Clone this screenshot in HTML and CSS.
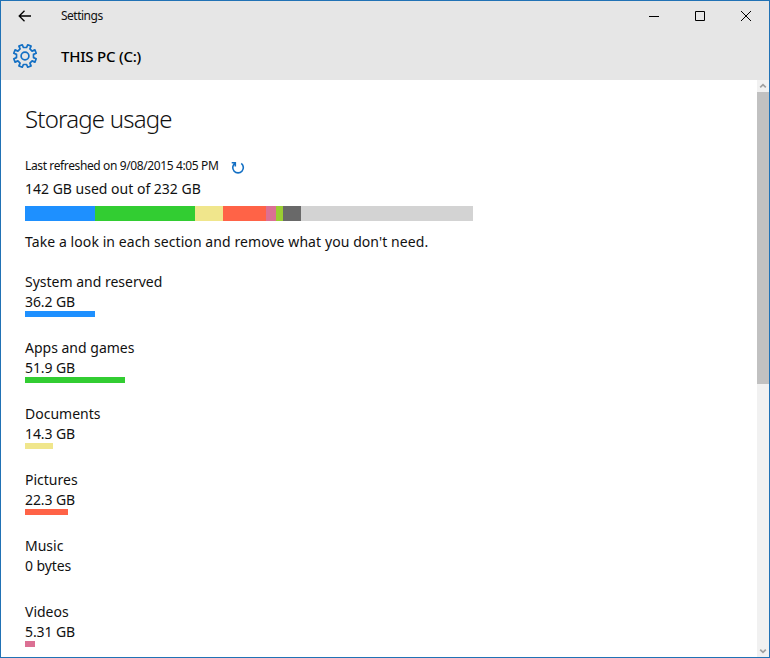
FILE: index.html
```html
<!DOCTYPE html>
<html lang="en">
<head>
<meta charset="utf-8">
<title>Settings</title>
<link rel="stylesheet" href="styles.css">
</head>
<body>
<div class="window">
  <header class="header">
    <div class="titlebar">
      <svg class="back" width="14" height="12" viewBox="0 0 14 12"><path d="M13 6H1.2M6.5 .8L1.2 6l5.3 5.2"/></svg>
      <span class="app-name">Settings</span>
      <svg class="control" width="46" height="30" viewBox="0 0 46 30"><path d="M18 15.5h10"/></svg>
      <svg class="control" width="46" height="30" viewBox="0 0 46 30"><path d="M18.5 10.5h9v9h-9z"/></svg>
      <svg class="control" width="46" height="30" viewBox="0 0 46 30"><path d="M18 10l10 10M28 10L18 20"/></svg>
    </div>
    <div class="heading">
      <svg class="gear" width="26" height="26" viewBox="-13 -13 26 26"><path d="M8.5 1.6L11.2 2.7 9.9 6.1 7.1 4.9 4.9 7.1 6.1 9.9 2.7 11.2 1.6 8.5H-1.6L-2.7 11.2-6.1 9.9-4.9 7.1-7.1 4.9-9.9 6.1-11.2 2.7-8.5 1.6V-1.6L-11.2-2.7-9.9-6.1-7.1-4.9-4.9-7.1-6.1-9.9-2.7-11.2-1.6-8.5H1.6L2.7-11.2 6.1-9.9 4.9-7.1 7.1-4.9 9.9-6.1 11.2-2.7 8.5-1.6z"/><circle r="3.9"/></svg>
      <h1 class="drive">THIS PC (C:)</h1>
    </div>
  </header>
  <div class="body">
    <main class="content">
      <h2 class="title">Storage usage</h2>
      <div class="refreshed"><span class="stamp">Last refreshed on 9/08/2015 4:05 PM</span><svg class="refresh" width="14" height="14" viewBox="0 0 14 14"><path d="M3.8 2.4A5.3 5.3 0 1 0 10.3 2.4M.7 1.7h3.6v3.8"/></svg></div>
      <p class="total">142 GB used out of 232 GB</p>
      <div class="usage">
        <i class="system" style="width:70px"></i><i class="apps" style="width:100px"></i><i class="documents" style="width:28px"></i><i class="pictures" style="width:43px"></i><i class="videos" style="width:10px"></i><i class="mail" style="width:7px"></i><i class="other" style="width:18px"></i>
      </div>
      <p class="hint">Take a look in each section and remove what you don't need.</p>
      <section class="item"><h3>System and reserved</h3><p>36.2 GB</p><i class="system" style="width:70px"></i></section>
      <section class="item"><h3>Apps and games</h3><p>51.9 GB</p><i class="apps" style="width:100px"></i></section>
      <section class="item"><h3>Documents</h3><p>14.3 GB</p><i class="documents" style="width:28px"></i></section>
      <section class="item"><h3>Pictures</h3><p>22.3 GB</p><i class="pictures" style="width:43px"></i></section>
      <section class="item"><h3>Music</h3><p>0 bytes</p></section>
      <section class="item"><h3>Videos</h3><p>5.31 GB</p><i class="videos" style="width:10px"></i></section>
    </main>
    <div class="scrollbar">
      <svg width="12" height="12" viewBox="0 0 12 12"><path d="M3.2 7.3L6 4.6l2.8 2.7"/></svg>
      <div class="thumb"></div>
      <svg class="down" width="12" height="12" viewBox="0 0 12 12"><path d="M3.2 4.7L6 7.4l2.8-2.7"/></svg>
    </div>
  </div>
</div>
</body>
</html>
```
FILE: styles.css
```css
* { box-sizing: border-box; margin: 0; padding: 0; }
body { font: 14px/20px "Noto Sans", "Open Sans", sans-serif; color: #111; overflow: hidden; }
svg { display: block; flex: none; fill: none; }
h1, h2, h3 { font: inherit; }
.window { width: 770px; height: 658px; border: 1px solid #2172b5; background: #fff; display: flex; flex-direction: column; }
.header { height: 79px; background: #e6e6e6; }
.titlebar { height: 30px; display: flex; align-items: center; }
.back { margin: 0 29px 0 17px; stroke: #000; stroke-width: 1.3; }
.app-name { flex: 1; font-size: 12px; letter-spacing: -.5px; }
.control { stroke: #000; }
.heading { height: 49px; display: flex; align-items: center; padding-left: 11px; }
.gear { stroke: #1470c4; stroke-width: 1.7; margin-right: 23px; stroke-linejoin: round; }
.drive { font-size: 15px; font-weight: 500; letter-spacing: -.22px; color: #000; }
.body { height: 577px; display: flex; }
.content { flex: 1; padding: 24px 0 0 24px; overflow: hidden; white-space: nowrap; }
.title { font-size: 24px; font-weight: 300; letter-spacing: -.8px; line-height: 29px; height: 52px; }
.refreshed { display: flex; height: 20px; }
.stamp { font-size: 12px; letter-spacing: -.38px; width: 206px; }
.refresh { stroke: #1470c4; stroke-width: 1.6; margin-top: 5px; }
.total { height: 30px; padding-top: 3px; }
.usage { width: 448px; height: 15px; display: flex; background: #d3d3d3; }
.hint { margin: 11px 0 20px; letter-spacing: .08px; }
.item { height: 66px; }
.item p { letter-spacing: -.1px; }
.item i { display: block; height: 6px; margin-top: -1px; }
.system { background: #1e90ff; }
.apps { background: #32cd32; }
.documents { background: #f0e68c; }
.pictures { background: #ff6347; }
.videos { background: #db7093; }
.mail { background: #9acd32; }
.other { background: #696969; }
.scrollbar { width: 12px; background: #f1f1f1; display: flex; flex-direction: column; }
.scrollbar svg { stroke: #a0a0a0; stroke-width: 1.7; }
.thumb { height: 292px; background: #c1c1c1; }
.scrollbar .down { margin-top: auto; }
```
